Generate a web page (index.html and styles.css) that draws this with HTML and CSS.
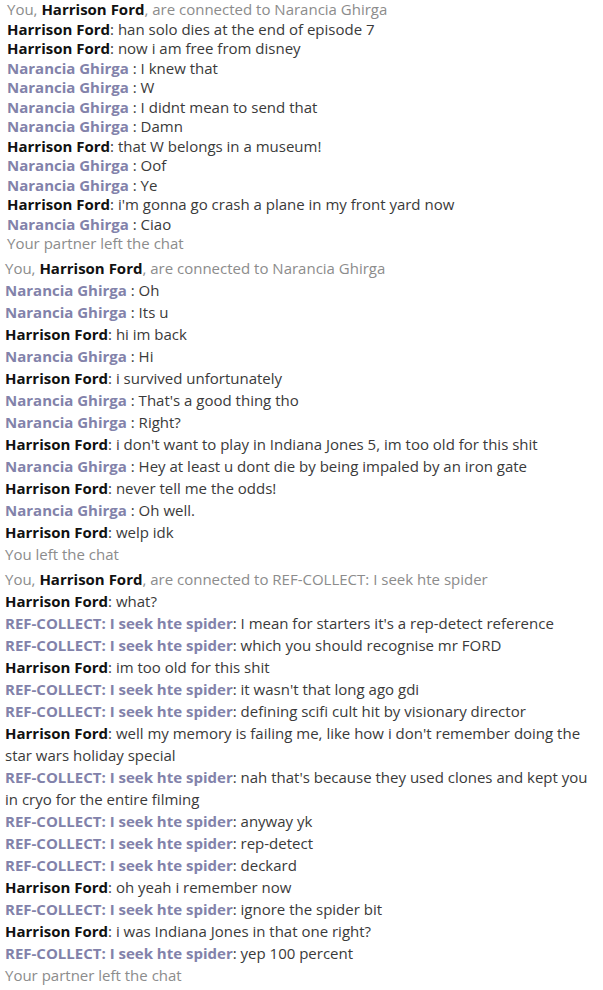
FILE: index.html
```html
<!DOCTYPE html>
<html>
<head>
<meta charset="utf-8">
<link rel="stylesheet" href="styles.css">
</head>
<body>
<div class="log log-a">
  <div class="sys">You, <b class="me">Harrison Ford</b>, are connected to Narancia Ghirga</div>
  <div class="msg"><b class="me">Harrison Ford</b>: han solo dies at the end of episode 7</div>
  <div class="msg"><b class="me">Harrison Ford</b>: now i am free from disney</div>
  <div class="msg"><b class="them">Narancia Ghirga </b>: I knew that</div>
  <div class="msg"><b class="them">Narancia Ghirga </b>: W</div>
  <div class="msg"><b class="them">Narancia Ghirga </b>: I didnt mean to send that</div>
  <div class="msg"><b class="them">Narancia Ghirga </b>: Damn</div>
  <div class="msg"><b class="me">Harrison Ford</b>: that W belongs in a museum!</div>
  <div class="msg"><b class="them">Narancia Ghirga </b>: Oof</div>
  <div class="msg"><b class="them">Narancia Ghirga </b>: Ye</div>
  <div class="msg"><b class="me">Harrison Ford</b>: i'm gonna go crash a plane in my front yard now</div>
  <div class="msg"><b class="them">Narancia Ghirga </b>: Ciao</div>
  <div class="sys">Your partner left the chat</div>
</div>
<div class="log log-b">
  <div class="sys">You, <b class="me">Harrison Ford</b>, are connected to Narancia Ghirga</div>
  <div class="msg"><b class="them">Narancia Ghirga </b>: Oh</div>
  <div class="msg"><b class="them">Narancia Ghirga </b>: Its u</div>
  <div class="msg"><b class="me">Harrison Ford</b>: hi im back</div>
  <div class="msg"><b class="them">Narancia Ghirga </b>: Hi</div>
  <div class="msg"><b class="me">Harrison Ford</b>: i survived unfortunately</div>
  <div class="msg"><b class="them">Narancia Ghirga </b>: That's a good thing tho</div>
  <div class="msg"><b class="them">Narancia Ghirga </b>: Right?</div>
  <div class="msg"><b class="me">Harrison Ford</b>: i don't want to play in Indiana Jones 5, im too old for this shit</div>
  <div class="msg"><b class="them">Narancia Ghirga </b>: Hey at least u dont die by being impaled by an iron gate</div>
  <div class="msg"><b class="me">Harrison Ford</b>: never tell me the odds!</div>
  <div class="msg"><b class="them">Narancia Ghirga </b>: Oh well.</div>
  <div class="msg"><b class="me">Harrison Ford</b>: welp idk</div>
  <div class="sys">You left the chat</div>
</div>
<div class="log log-b log-c">
  <div class="sys">You, <b class="me">Harrison Ford</b>, are connected to REF-COLLECT: I seek hte spider</div>
  <div class="msg"><b class="me">Harrison Ford</b>: what?</div>
  <div class="msg"><b class="them">REF-COLLECT: I seek hte spider</b>: I mean for starters it's a rep-detect reference</div>
  <div class="msg"><b class="them">REF-COLLECT: I seek hte spider</b>: which you should recognise mr FORD</div>
  <div class="msg"><b class="me">Harrison Ford</b>: im too old for this shit</div>
  <div class="msg"><b class="them">REF-COLLECT: I seek hte spider</b>: it wasn't that long ago gdi</div>
  <div class="msg"><b class="them">REF-COLLECT: I seek hte spider</b>: defining scifi cult hit by visionary director</div>
  <div class="msg"><b class="me">Harrison Ford</b>: well my memory is failing me, like how i don't remember doing the star wars holiday special</div>
  <div class="msg"><b class="them">REF-COLLECT: I seek hte spider</b>: nah that's because they used clones and kept you in cryo for the entire filming</div>
  <div class="msg"><b class="them">REF-COLLECT: I seek hte spider</b>: anyway yk</div>
  <div class="msg"><b class="them">REF-COLLECT: I seek hte spider</b>: rep-detect</div>
  <div class="msg"><b class="them">REF-COLLECT: I seek hte spider</b>: deckard</div>
  <div class="msg"><b class="me">Harrison Ford</b>: oh yeah i remember now</div>
  <div class="msg"><b class="them">REF-COLLECT: I seek hte spider</b>: ignore the spider bit</div>
  <div class="msg"><b class="me">Harrison Ford</b>: i was Indiana Jones in that one right?</div>
  <div class="msg"><b class="them">REF-COLLECT: I seek hte spider</b>: yep 100 percent</div>
  <div class="sys">Your partner left the chat</div>
</div>
</body>
</html>
```

FILE: styles.css
```css
html, body {
  margin: 0;
  padding: 0;
  background: #ffffff;
}
body {
  font-family: "Open Sans", "Noto Sans", sans-serif;
  font-size: 15px;
  color: #3a3a3a;
}
.log {
  display: flex;
  flex-direction: column;
}
.log-a {
  padding: 0 8px 0 7px;
  line-height: 19.5px;
}
.log-b {
  padding: 3px 8px 0 5px;
  line-height: 22px;
}
.log-c {
  padding-top: 3px;
}
.sys {
  color: #8c8c8c;
}
.me {
  color: #111111;
  font-weight: 700;
}
.them {
  color: #8282aa;
  font-weight: 700;
}
```
